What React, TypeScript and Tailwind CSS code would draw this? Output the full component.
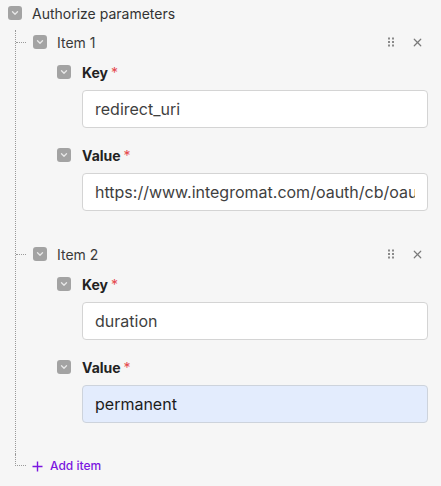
import { X } from "lucide-react";

const Toggle = () => (
  <div className="w-[14px] h-[14px] rounded-[3px] bg-[#a3a3a3] flex items-center justify-center shrink-0">
    <svg width="8" height="6" viewBox="0 0 8 6" fill="none">
      <path d="M1.5 1.8 L4 4.2 L6.5 1.8" stroke="#e8e8e8" strokeWidth="1.3" strokeLinecap="round" strokeLinejoin="round" />
    </svg>
  </div>
);

const DragDots = () => (
  <svg width="16" height="16" viewBox="0 0 16 16" className="text-[#8a8a8a]" fill="currentColor">
    <rect x="5" y="3.5" width="2" height="2" />
    <rect x="9" y="3.5" width="2" height="2" />
    <rect x="5" y="7" width="2" height="2" />
    <rect x="9" y="7" width="2" height="2" />
    <rect x="5" y="10.5" width="2" height="2" />
    <rect x="9" y="10.5" width="2" height="2" />
  </svg>
);

const Field = ({ label, value, active }: { label: string; value: string; active?: boolean }) => (
  <div>
    <div className="h-6 flex items-center gap-[11px]">
      <Toggle />
      <span className="text-[14px] font-bold text-[#222]">
        {label}
        <span className="text-[#e5484d] font-normal ml-[3px]">*</span>
      </span>
    </div>
    <input
      readOnly
      value={value}
      className={`mt-[6px] ml-[25px] w-[346px] h-[38px] rounded-[4px] border px-3 text-[16px] outline-none ${
        active ? "bg-[#e3ecfd] border-[#cdd3dc] text-[#1c1c1c]" : "bg-white border-[#d4d4d4] text-[#3f3f3f]"
      }`}
    />
  </div>
);

const Item = ({ name, k, v, active }: { name: string; k: string; v: string; active?: boolean }) => (
  <div>
    <div className="h-6 flex items-center">
      <div className="w-[10px] border-t border-dotted border-[#9a9a9a]" />
      <div className="ml-[7px] flex items-center gap-[10px] flex-1">
        <Toggle />
        <span className="text-[14px] text-[#3a3a3a]">{name}</span>
        <div className="ml-auto flex items-center gap-[12px] pr-[4px]">
          <DragDots />
          <X className="w-[13px] h-[13px] text-[#7a7a7a]" strokeWidth={2.2} />
        </div>
      </div>
    </div>
    <div className="pl-[41px] mt-[6px]">
      <Field label="Key" value={k} />
      <div className="mt-[15px]">
        <Field label="Value" value={v} active={active} />
      </div>
    </div>
  </div>
);

export default function App() {
  return (
    <div className="w-[441px] h-[486px] bg-[#f6f6f6] overflow-hidden" style={{ fontFamily: "Inter, 'Noto Sans', sans-serif" }}>
      <div className="h-[26px] flex items-center gap-[10px] pl-[8px]">
        <Toggle />
        <span className="text-[14px] text-[#333]">Authorize parameters</span>
      </div>
      <div className="ml-[15px] mt-[4px] w-[413px]">
        <div className="border-l border-dotted border-[#9a9a9a] pb-[31px]">
          <Item name="Item 1" k="redirect_uri" v="https://www.integromat.com/oauth/cb/oauth2" />
          <div className="mt-[31px]">
            <Item name="Item 2" k="duration" v="permanent" active />
          </div>
        </div>
        <div className="h-6 flex items-start">
          <div className="w-[11px] h-[12px] border-l border-b border-dotted border-[#9a9a9a]" />
          <div className="self-center flex items-center gap-[7px] ml-[6px] text-[#7b16e0]">
            <svg width="11" height="11" viewBox="0 0 11 11" fill="none">
              <path d="M5.5 0.5 V10.5 M0.5 5.5 H10.5" stroke="currentColor" strokeWidth="1.4" />
            </svg>
            <span className="text-[12px] font-medium">Add item</span>
          </div>
        </div>
      </div>
    </div>
  );
}
